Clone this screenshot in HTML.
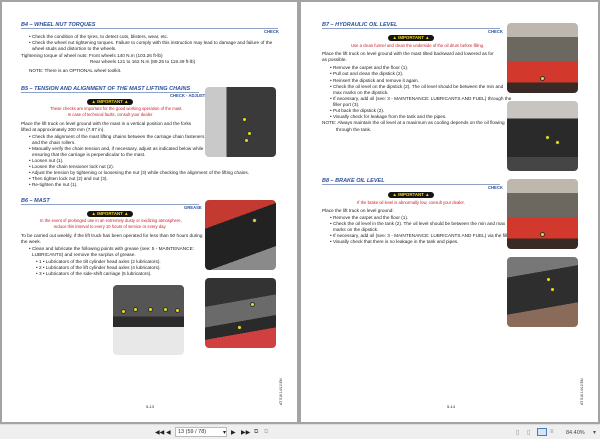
<!DOCTYPE html>
<html><head><meta charset="utf-8"><style>
*{margin:0;padding:0;box-sizing:border-box}
body{width:600px;height:439px;overflow:hidden;background:#a3a3a3;font-family:"Liberation Sans",sans-serif;position:relative}
.pg{position:absolute;top:2px;height:420px;background:#fff}
.t{position:absolute;font-size:4.7px;line-height:6px;color:#222;white-space:nowrap}
.h{position:absolute;font-size:5.5px;font-weight:bold;font-style:italic;color:#2e4f9a;white-space:nowrap}
.ul{position:absolute;height:1px;background:#8fa3c8}
.ck{position:absolute;font-size:4.2px;font-weight:bold;color:#2e4f9a;white-space:nowrap}
.bd{position:absolute;width:46px;height:6px;background:#151515;border-radius:3px;color:#f2d81c;font-size:4.4px;font-weight:bold;text-align:center;line-height:6px}
.r{position:absolute;font-size:4.2px;color:#c8202a;white-space:nowrap;text-align:center}
.im{position:absolute;width:71px;height:70px;border-radius:4px;overflow:hidden}
.d{position:absolute;width:5px;height:5px;border-radius:50%;background:#e8dc20;border:1px solid #333}
.tb{position:absolute;top:424px;left:0;width:600px;height:15px;background:#efefef;border-top:1px solid #ddd}
.ic{position:absolute;top:429px;font-size:6px;color:#222}
</style></head><body>
<div class="pg" style="left:2px;width:295px"></div>
<div class="pg" style="left:301px;width:297px"></div>

<!-- LEFT PAGE -->
<div class="h" style="left:21px;top:22px">B4 – WHEEL NUT TORQUES</div>
<div class="ul" style="left:21px;top:28px;width:257px"></div>
<div class="ck" style="left:264px;top:29px">CHECK</div>
<div class="t" style="left:29px;top:34px">• Check the condition of the tyres, to detect cuts, blisters, wear, etc.</div>
<div class="t" style="left:29px;top:40px">• Check the wheel nut tightening torques. Failure to comply with this instruction may lead to damage and failure of the</div>
<div class="t" style="left:32px;top:46px">wheel studs and distortion to the wheels.</div>
<div class="t" style="left:21px;top:53px">Tightening torque of wheel nuts: Front wheels 140 N.m (103.26 ft-lb)</div>
<div class="t" style="left:90px;top:59px">Rear wheels 121 to 162 N.m (89.25 to 119.49 ft-lb)</div>
<div class="t" style="left:29px;top:68px">NOTE: There is an OPTIONAL wheel toolkit.</div>

<div class="h" style="left:21px;top:86px">B5 – TENSION AND ALIGNMENT OF THE MAST LIFTING CHAINS</div>
<div class="ul" style="left:21px;top:92px;width:178px"></div>
<div class="ck" style="left:170px;top:93px">CHECK - ADJUST</div>
<div class="bd" style="left:87px;top:99px">▲ IMPORTANT ▲</div>
<div class="r" style="left:50px;top:106px;width:120px">These checks are important for the good working operation of the mast.</div>
<div class="r" style="left:50px;top:112px;width:120px">In case of technical faults, consult your dealer</div>
<div class="t" style="left:21px;top:121px">Place the lift truck on level ground with the mast in a vertical position and the forks</div>
<div class="t" style="left:21px;top:127px">lifted at approximately 200 mm (7.87 in).</div>
<div class="t" style="left:29px;top:134px">• Check the alignment of the mast lifting chains between the carriage chain fasteners</div>
<div class="t" style="left:32px;top:140px">and the chain rollers.</div>
<div class="t" style="left:29px;top:146px">• Manually verify the chain tension and, if necessary, adjust as indicated below while</div>
<div class="t" style="left:32px;top:152px">ensuring that the carriage is perpendicular to the mast.</div>
<div class="t" style="left:29px;top:158px">• Loosen nut (1).</div>
<div class="t" style="left:29px;top:164px">• Loosen the chain tensioner lock nut (2).</div>
<div class="t" style="left:29px;top:170px">• Adjust the tension by tightening or loosening the nut (3) while checking the alignment of the lifting chains.</div>
<div class="t" style="left:29px;top:176px">• Then tighten lock nut (2) and nut (3).</div>
<div class="t" style="left:29px;top:182px">• Re-tighten the nut (1).</div>
<div class="im" style="left:205px;top:87px;background:linear-gradient(90deg,#c9c9c9 0 30%,#3a3a3a 30% 100%)"><div class="d" style="left:37px;top:30px"></div><div class="d" style="left:42px;top:44px"></div><div class="d" style="left:39px;top:51px"></div></div>

<div class="h" style="left:21px;top:198px">B6 – MAST</div>
<div class="ul" style="left:21px;top:204px;width:178px"></div>
<div class="ck" style="left:184px;top:205px">GREASE</div>
<div class="bd" style="left:87px;top:211px">▲ IMPORTANT ▲</div>
<div class="r" style="left:40px;top:218px;width:140px">In the event of prolonged use in an extremely dusty or oxidizing atmosphere,</div>
<div class="r" style="left:40px;top:224px;width:140px">reduce this interval to every 10 hours of service or every day.</div>
<div class="t" style="left:21px;top:233px">To be carried out weekly, if the lift truck has been operated for less than 50 hours during</div>
<div class="t" style="left:21px;top:239px">the week.</div>
<div class="t" style="left:29px;top:246px">• Clean and lubricate the following points with grease (see: 5 - MAINTENANCE:</div>
<div class="t" style="left:32px;top:252px">LUBRICANTS) and remove the surplus of grease.</div>
<div class="t" style="left:36px;top:259px">• 1 • Lubricators of the tilt cylinder head axles (2 lubricators).</div>
<div class="t" style="left:36px;top:265px">• 2 • Lubricators of the lift cylinder head axles (4 lubricators).</div>
<div class="t" style="left:36px;top:271px">• 3 • Lubricators of the side-shift carriage (5 lubricators).</div>
<div class="im" style="left:205px;top:200px;background:linear-gradient(160deg,#c43a30 0 30%,#222 30% 75%,#8a8a8a 75%)"><div class="d" style="left:47px;top:18px"></div></div>
<div class="im" style="left:205px;top:278px;background:linear-gradient(170deg,#333 0 35%,#6a6a6a 35% 60%,#2a2a2a 60% 75%,#d04040 75%)"><div class="d" style="left:45px;top:24px"></div><div class="d" style="left:32px;top:47px"></div></div>
<div class="im" style="left:113px;top:285px;background:linear-gradient(180deg,#555 0 45%,#2b2b2b 45% 60%,#e8e8e8 60%)"><div class="d" style="left:8px;top:24px"></div><div class="d" style="left:20px;top:22px"></div><div class="d" style="left:35px;top:22px"></div><div class="d" style="left:50px;top:22px"></div><div class="d" style="left:62px;top:23px"></div></div>
<div class="t" style="left:146px;top:404px;font-size:4px">5-13</div>
<div class="t" style="left:278px;top:405px;font-size:3.5px;transform:rotate(-90deg);transform-origin:left top">AT 516 14/12 EN</div>

<!-- RIGHT PAGE -->
<div class="h" style="left:322px;top:22px">B7 – HYDRAULIC OIL LEVEL</div>
<div class="ul" style="left:322px;top:28px;width:178px"></div>
<div class="ck" style="left:488px;top:29px">CHECK</div>
<div class="bd" style="left:388px;top:35px">▲ IMPORTANT ▲</div>
<div class="r" style="left:351px;top:43px;width:120px">Use a clean funnel and clean the underside of the oil drum before filling.</div>
<div class="t" style="left:322px;top:51px">Place the lift truck on level ground with the mast tilted backward and lowered as for</div>
<div class="t" style="left:322px;top:57px">as possible.</div>
<div class="t" style="left:330px;top:65px">• Remove the carpet and the floor (1).</div>
<div class="t" style="left:330px;top:71px">• Pull out and clean the dipstick (2).</div>
<div class="t" style="left:330px;top:78px">• Reinsert the dipstick and remove it again.</div>
<div class="t" style="left:330px;top:84px">• Check the oil level on the dipstick (2). The oil level should be between the min and</div>
<div class="t" style="left:333px;top:90px">max marks on the dipstick.</div>
<div class="t" style="left:330px;top:96px">• If necessary, add oil (see: 3 - MAINTENANCE: LUBRICANTS AND FUEL) through the</div>
<div class="t" style="left:333px;top:102px">filler port (3).</div>
<div class="t" style="left:330px;top:108px">• Put back the dipstick (2).</div>
<div class="t" style="left:330px;top:114px">• Visually check for leakage from the tank and the pipes.</div>
<div class="t" style="left:322px;top:120px">NOTE: Always maintain the oil level at a maximum as cooling depends on the oil flowing</div>
<div class="t" style="left:336px;top:127px">through the tank.</div>

<div class="h" style="left:322px;top:178px">B8 – BRAKE OIL LEVEL</div>
<div class="ul" style="left:322px;top:184px;width:178px"></div>
<div class="ck" style="left:488px;top:185px">CHECK</div>
<div class="bd" style="left:388px;top:192px">▲ IMPORTANT ▲</div>
<div class="r" style="left:351px;top:200px;width:120px">If the brake oil level is abnormally low, consult your dealer.</div>
<div class="t" style="left:322px;top:208px">Place the lift truck on level ground:</div>
<div class="t" style="left:330px;top:215px">• Remove the carpet and the floor (1).</div>
<div class="t" style="left:330px;top:221px">• Check the oil level in the tank (2). The oil level should be between the min and max</div>
<div class="t" style="left:333px;top:227px">marks on the dipstick.</div>
<div class="t" style="left:330px;top:233px">• If necessary, add oil (see: 3 - MAINTENANCE: LUBRICANTS AND FUEL) via the filler port (3).</div>
<div class="t" style="left:330px;top:239px">• Visually check that there is no leakage in the tank and pipes.</div>
<div class="im" style="left:507px;top:23px;background:linear-gradient(180deg,#bdb7ae 0 20%,#6c675f 20% 55%,#d2382c 55% 85%,#3a2a25 85%)"><div class="d" style="left:33px;top:53px"></div></div>
<div class="im" style="left:507px;top:101px;background:linear-gradient(180deg,#c8c4c0 0 25%,#2a2a2a 25% 80%,#454545 80%)"><div class="d" style="left:38px;top:34px"></div><div class="d" style="left:48px;top:39px"></div></div>
<div class="im" style="left:507px;top:179px;background:linear-gradient(180deg,#bdb7ae 0 20%,#6c675f 20% 55%,#d2382c 55% 85%,#3a2a25 85%)"><div class="d" style="left:33px;top:53px"></div></div>
<div class="im" style="left:507px;top:257px;background:linear-gradient(170deg,#777 0 25%,#2e2e2e 25% 70%,#8a6a58 70%)"><div class="d" style="left:39px;top:20px"></div><div class="d" style="left:43px;top:30px"></div></div>
<div class="t" style="left:447px;top:404px;font-size:4px">5-14</div>
<div class="t" style="left:579px;top:405px;font-size:3.5px;transform:rotate(-90deg);transform-origin:left top">AT 516 14/12 EN</div>

<!-- TOOLBAR -->
<div class="tb"></div>
<div class="ic" style="left:155px">◀◀</div>
<div class="ic" style="left:166px">◀</div>
<div style="position:absolute;left:175px;top:427px;width:52px;height:10px;background:#fff;border:1px solid #bbb;font-size:5.5px;line-height:8px;padding-left:2px;color:#333">13 (59 / 78)</div>
<div class="ic" style="left:223px">▾</div>
<div class="ic" style="left:231px">▶</div>
<div class="ic" style="left:241px">▶▶</div>
<div class="ic" style="left:254px;color:#666">⧉</div>
<div class="ic" style="left:264px;color:#bbb">⧉</div>
<div class="ic" style="left:516px;color:#888">▯</div>
<div class="ic" style="left:527px;color:#888">▯</div>
<div style="position:absolute;left:537px;top:428px;width:10px;height:8px;border:1px solid #4a7cc0;background:#d8e4f4"></div>
<div class="ic" style="left:550px;color:#888">≡</div>
<div class="ic" style="left:566px;color:#444;font-size:5.5px;top:430px">84.40%</div>
<div class="ic" style="left:593px;color:#555">▾</div>
</body></html>
